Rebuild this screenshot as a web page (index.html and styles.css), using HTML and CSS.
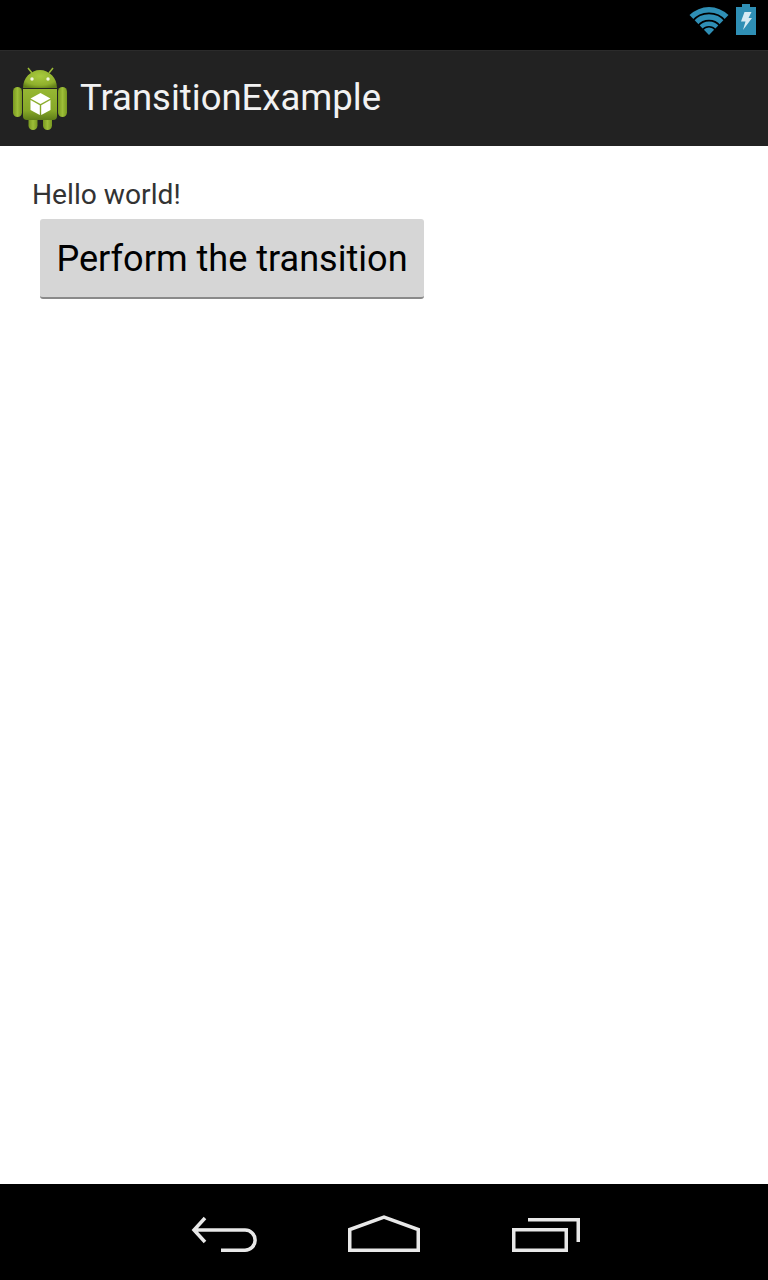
FILE: index.html
```html
<!DOCTYPE html>
<html lang="en">
<head>
    <meta charset="UTF-8">
    <meta name="viewport" content="width=device-width, initial-scale=1.0">
    <title>TransitionExample</title>
    <link rel="stylesheet" href="styles.css">
</head>
<body>

    <div class="status-bar">
        <svg class="wifi-icon" width="40" height="28" viewBox="0 0 40 28">
            <path d="M20 28 L0.500 8 A28 28 0 0 1 39.500 8 Z" fill="#2f8fb5"/>
            <path d="M3.400 14.050 A21.700 21.700 0 0 1 36.600 14.050" fill="none" stroke="#000" stroke-width="1.800"/>
            <path d="M9.050 18.800 A14.300 14.300 0 0 1 30.950 18.800" fill="none" stroke="#000" stroke-width="1.800"/>
            <path d="M13.640 22.660 A8.300 8.300 0 0 1 26.360 22.660" fill="none" stroke="#000" stroke-width="1.500"/>
        </svg>
        <svg class="battery-icon" width="20" height="31" viewBox="0 0 20 31">
            <path d="M6 0 H14 V3 H20 V31 H0 V3 H6 Z" fill="#2f8fb5"/>
            <path d="M8.500 8 H15.500 L12.500 14 H16 L7 26 L9.500 17.500 H5 Z" fill="#d5eaf3"/>
        </svg>
    </div>

    <div class="action-bar">
        <svg class="app-icon" width="56" height="64" viewBox="0 0 56 64">
            <defs>
                <radialGradient id="droid-head" cx="0.5" cy="0.35" r="0.7">
                    <stop offset="0" stop-color="#a8ca3e"/>
                    <stop offset="0.7" stop-color="#8fb02c"/>
                    <stop offset="1" stop-color="#64821a"/>
                </radialGradient>
                <linearGradient id="droid-body" x1="0" y1="0" x2="0" y2="1">
                    <stop offset="0" stop-color="#96b733"/>
                    <stop offset="0.7" stop-color="#86a728"/>
                    <stop offset="1" stop-color="#5f7d18"/>
                </linearGradient>
                <linearGradient id="droid-limb" x1="0" y1="0" x2="1" y2="0">
                    <stop offset="0" stop-color="#789820"/>
                    <stop offset="0.5" stop-color="#9dbe38"/>
                    <stop offset="1" stop-color="#789820"/>
                </linearGradient>
            </defs>
            <path d="M16 1 L20 6 M41 1 L37 6" stroke="#9cbc36" stroke-width="1.500"/>
            <path d="M11 21 A17 18 0 0 1 45 21 Z" fill="url(#droid-head)"/>
            <circle cx="20" cy="12" r="1.700" fill="#f2f6e0"/>
            <circle cx="36" cy="12" r="1.700" fill="#f2f6e0"/>
            <rect x="1" y="20" width="9" height="30" rx="4.500" fill="url(#droid-limb)"/>
            <rect x="46" y="20" width="9" height="30" rx="4.500" fill="url(#droid-limb)"/>
            <rect x="16.500" y="48" width="9" height="15" rx="4.500" fill="url(#droid-limb)"/>
            <rect x="31" y="48" width="9" height="15" rx="4.500" fill="url(#droid-limb)"/>
            <path d="M11 22 H45 V49 A4 4 0 0 1 41 53 H15 A4 4 0 0 1 11 49 Z" fill="url(#droid-body)"/>
            <path d="M28.500 26 L38.500 31.500 L28.500 37 L18.500 31.500 Z" fill="#fff"/>
            <path d="M18.500 33 L27.800 38.200 V48 L18.500 43 Z" fill="#fff"/>
            <path d="M38.500 33 L29.200 38.200 V48 L38.500 43 Z" fill="#fff"/>
        </svg>
        <span class="app-title">TransitionExample</span>
    </div>

    <div class="content">
        <div class="hello">Hello world!</div>
        <button class="transition-btn">Perform the transition</button>
    </div>

    <div class="nav-bar">
        <svg width="66" height="38" viewBox="0 0 66 38">
            <path d="M14 3 L3 15 L14 27 M3 15 H54 A10 10 0 0 1 54 35.250 H30" fill="none" stroke="#e8e8e8" stroke-width="3.500"/>
        </svg>
        <svg width="72" height="38" viewBox="0 0 72 38">
            <path d="M1.750 35.250 V14.500 L36 2 L70.250 14.500 V35.250 Z" fill="none" stroke="#e8e8e8" stroke-width="3.500"/>
        </svg>
        <svg width="69" height="38" viewBox="0 0 69 38">
            <rect x="2.750" y="14.750" width="52.500" height="20.500" fill="none" stroke="#e8e8e8" stroke-width="3.500"/>
            <path d="M17 4.750 H67.250 V27" fill="none" stroke="#e8e8e8" stroke-width="3.500"/>
        </svg>
    </div>

</body>
</html>
```

FILE: styles.css
```css
body {
    font-family: Roboto, "Liberation Sans", sans-serif;
    background-color: #ffffff;
    margin: 0;
    padding: 0;
    height: 1280px;
    display: flex;
    flex-direction: column;
    overflow: hidden;
}

.status-bar {
    height: 50px;
    background-color: #000000;
    display: flex;
    justify-content: flex-end;
    align-items: flex-start;
    gap: 7px;
    padding: 4px 12px 0 0;
    box-sizing: border-box;
}

.wifi-icon {
    margin-top: 3px;
}

.action-bar {
    height: 96px;
    background-color: #222222;
    border-top: 1px solid #2b2b2b;
    box-sizing: border-box;
    display: flex;
    align-items: center;
    gap: 12px;
    padding-left: 12px;
}

.app-title {
    color: #f2f2f2;
    font-size: 36.5px;
    padding-bottom: 2px;
}

.content {
    flex: 1;
    padding: 32px 0 0 32px;
}

.hello {
    color: #333333;
    font-size: 28.2px;
    line-height: 33px;
}

.transition-btn {
    display: block;
    margin: 8px 0 0 8px;
    width: 384px;
    height: 80px;
    padding: 2px 0 0 0;
    background-color: #d6d6d6;
    border: none;
    border-bottom: 2px solid #8a8a8a;
    border-radius: 3px;
    color: #000000;
    font-family: inherit;
    font-size: 36.1px;
}

.nav-bar {
    height: 96px;
    background-color: #000000;
    display: flex;
    align-items: flex-start;
    gap: 91px;
    padding: 31px 0 0 191px;
    box-sizing: border-box;
}
```
